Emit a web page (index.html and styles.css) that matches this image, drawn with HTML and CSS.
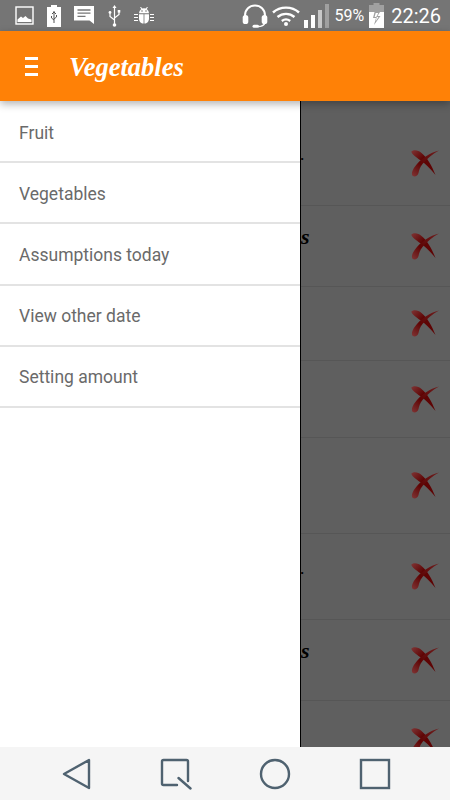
FILE: index.html
```html
<!DOCTYPE html>
<html lang="en">
<head>
<meta charset="utf-8">
<title>Vegetables</title>
<link rel="stylesheet" href="styles.css">
</head>
<body>
<svg class="defs" width="0" height="0" aria-hidden="true">
  <defs>
    <linearGradient id="blob" x1="0" y1="0" x2="1" y2="1">
      <stop offset="0" stop-color="#7f3535"/>
      <stop offset="0.4" stop-color="#5e0404"/>
      <stop offset="1" stop-color="#5e0404"/>
    </linearGradient>
    <linearGradient id="blob2" x1="1" y1="0" x2="0" y2="1">
      <stop offset="0" stop-color="#6e2020"/>
      <stop offset="0.6" stop-color="#5e0404"/>
      <stop offset="1" stop-color="#7f3535"/>
    </linearGradient>
    <symbol id="cross" viewBox="0 0 28 27">
      <path fill="url(#blob)" d="M0.3 1.5C3 -0.8 7.5 0.2 10.5 3C16.5 8 20.5 15 24.5 25C19 18 14 13.5 9 10C5 7 1 4.8 0.3 1.5Z"/>
      <path fill="url(#blob2)" d="M28 0.5C22.5 3.5 16 8.5 11.5 14C9 17 8.2 20 7.5 23C6.8 26.2 3.5 27.4 1.5 25.8C0 23.5 1.5 19.8 4 16.5C9.5 9 19 2.5 28 0.5Z"/>
    </symbol>
  </defs>
</svg>

<div class="screen">
  <header class="status">
    <div class="status-left">
      <svg class="ic" width="19" height="19" viewBox="0 0 19 19"><rect x="1" y="1" width="17" height="17" fill="none" stroke="#fff" stroke-width="1.4"/><path fill="#fff" d="M2.5 16V13.5L6 10.5L8 12L10.5 10L13 12.5L16.5 13.5V16Z"/></svg>
      <svg class="ic" width="14" height="22" viewBox="0 0 14 22"><path fill="#fff" d="M4 0H10V2H14V22H0V2H4Z"/><path fill="none" stroke="#555" stroke-width="1" d="M7 6V18M5 9L7 7L9 9M4.5 11V13L7 15M9.5 10V12L7 14"/></svg>
      <svg class="ic" width="21" height="20" viewBox="0 0 21 20"><path fill="#fff" d="M0 0H20V18L15.5 14.5H0Z"/><path stroke="#777" stroke-width="1.3" d="M3.5 4H16.5M3.5 7.2H16.5M3.5 10.4H11.5"/></svg>
      <svg class="ic" width="13" height="22" viewBox="0 0 13 22"><path fill="none" stroke="#fff" stroke-width="1.2" d="M6.5 2V20M6.5 15L2 11.5V8.5M6.5 13L11 9.5V7"/><path fill="#fff" d="M6.5 0L8.5 3H4.5Z"/><circle cx="6.5" cy="20" r="1.8" fill="#fff"/><circle cx="2" cy="7.5" r="1.4" fill="#fff"/><rect x="9.7" y="5" width="2.6" height="2.6" fill="#fff"/></svg>
      <svg class="ic" width="20" height="17" viewBox="0 0 20 17"><path fill="#fff" d="M5 6.2C5.2 3.2 7.2 1.2 10 1.2C12.8 1.2 14.8 3.2 15 6.2Z"/><path fill="#fff" d="M5 7.2H9.6V16.6C7 16.6 5 14.6 5 11.5ZM10.4 7.2H15V11.5C15 14.6 13 16.6 10.4 16.6Z"/><path stroke="#fff" stroke-width="1.1" d="M6.5 0.2L8 2M13.5 0.2L12 2M0 7.5H4M0 10.5H4M0 13.5H4M16 7.5H20M16 10.5H20M16 13.5H20"/><circle cx="8" cy="4" r="0.8" fill="#777"/><circle cx="12" cy="4" r="0.8" fill="#777"/></svg>
    </div>
    <div class="status-right">
      <svg class="ic" width="26" height="24" viewBox="0 0 26 24"><path fill="none" stroke="#fff" stroke-width="2" d="M3 14V11.5C3 5.5 7.5 1.5 13 1.5C18.5 1.5 23 5.5 23 11.5V14"/><rect x="0.7" y="11" width="5.6" height="9" rx="2.6" fill="#fff"/><rect x="19.7" y="11" width="5.6" height="9" rx="2.6" fill="#fff"/><path fill="none" stroke="#fff" stroke-width="1.3" d="M23 19C22 21.5 19.5 22.5 16 22.5"/><rect x="10.5" y="20.8" width="6.5" height="3" rx="1.5" fill="#fff"/></svg>
      <svg class="ic" width="28" height="21" viewBox="0 0 28 21"><path fill="none" stroke="#fff" stroke-width="2.4" d="M1 7.5C8 1 20 1 27 7.5M5.5 12C10.5 7.8 17.5 7.8 22.5 12M9.8 16C12.4 14 15.6 14 18.2 16"/><circle cx="14" cy="19" r="2" fill="#fff"/></svg>
      <svg class="ic" width="26" height="24" viewBox="0 0 26 24"><rect x="0" y="16" width="4" height="8" fill="#fff"/><rect x="7" y="11" width="4" height="13" fill="#fff"/><rect x="14" y="6" width="4" height="18" fill="#c8c8c8"/><rect x="21" y="0" width="4" height="24" fill="#a0a0a0"/></svg>
      <span class="pct">59%</span>
      <svg class="ic" width="15" height="25" viewBox="0 0 15 25"><path fill="#a0a0a0" d="M4.5 0H10.5V2H15V9H0V2H4.5Z"/><rect x="0" y="9" width="15" height="16" fill="#fff"/><path fill="#a0a0a0" d="M5.5 9H11L8.5 13H11.5L5 22L7 15H4Z"/><path fill="#fff" d="M6.7 10H9.3L7.2 14H9.5L6.5 18.5L7.8 14H5.6Z"/></svg>
      <span class="time">22:26</span>
    </div>
  </header>

  <div class="appbar">
    <div class="burger"><i></i><i></i><i></i></div>
    <h1 class="title">Vegetables</h1>
  </div>

  <main class="body">
    <nav class="drawer">
      <a class="item">Fruit</a>
      <a class="item">Vegetables</a>
      <a class="item">Assumptions today</a>
      <a class="item">View other date</a>
      <a class="item">Setting amount</a>
    </nav>
    <section class="list">
      <div class="row r1"><span class="frag dot">.</span><svg class="cross"><use href="#cross"/></svg></div>
      <div class="row r2"><span class="frag">s</span><svg class="cross"><use href="#cross"/></svg></div>
      <div class="row r3"><svg class="cross"><use href="#cross"/></svg></div>
      <div class="row r4"><svg class="cross"><use href="#cross"/></svg></div>
      <div class="row r5"><svg class="cross"><use href="#cross"/></svg></div>
      <div class="row r6"><span class="frag dot">.</span><svg class="cross"><use href="#cross"/></svg></div>
      <div class="row r7"><span class="frag">s</span><svg class="cross"><use href="#cross"/></svg></div>
      <div class="row r8"><svg class="cross"><use href="#cross"/></svg></div>
    </section>
  </main>

  <footer class="navbar">
    <svg width="30" height="32" viewBox="0 0 30 32"><path fill="none" stroke="#4f6270" stroke-width="2.4" stroke-linejoin="round" d="M27 2V30L2 16Z"/></svg>
    <svg width="32" height="32" viewBox="0 0 32 32"><path fill="none" stroke="#4f6270" stroke-width="2.4" stroke-linecap="round" stroke-linejoin="round" d="M17 27H3.5Q2 27 2 25.5V3.5Q2 2 3.5 2H26.5Q28 2 28 3.5V23M18.5 20L30.5 30.5"/></svg>
    <svg width="32" height="32" viewBox="0 0 32 32"><circle cx="16" cy="16" r="14" fill="none" stroke="#4f6270" stroke-width="2.4"/></svg>
    <svg width="32" height="32" viewBox="0 0 32 32"><rect x="2" y="2" width="28" height="28" fill="none" stroke="#4f6270" stroke-width="2.4"/></svg>
  </footer>
</div>
</body>
</html>
```
FILE: styles.css
```css
* { box-sizing: border-box; }
html, body { margin: 0; padding: 0; }
body { width: 450px; height: 800px; overflow: hidden; background: #fff; font-family: Roboto, "Liberation Sans", sans-serif; }
.defs { display: block; height: 0; }
.screen { width: 450px; height: 800px; display: flex; flex-direction: column; overflow: hidden; }

.status { height: 31px; flex: none; background: #757575; display: flex; justify-content: space-between; align-items: center; padding: 0 9px 0 15px; color: #fff; }
.status-left, .status-right { display: flex; align-items: center; }
.status-left { gap: 13px; }
.ic { display: block; flex: none; }
.status-right { gap: 4px; }
.pct { font-size: 16px; margin-right: 1px; }
.time { font-size: 20px; margin-left: 3px; }

.appbar { height: 70px; flex: none; background: #ff8106; display: flex; align-items: center; padding-left: 25px; position: relative; z-index: 2; box-shadow: 0 3px 8px rgba(0,0,0,.3); }
.burger { width: 13px; display: flex; flex-direction: column; gap: 5px; margin-top: 1px; }
.burger i { display: block; height: 3px; background: #fff; }
.title { margin: 3px 0 0 31px; color: #fff; font-family: "Liberation Serif", serif; font-style: italic; font-weight: 700; font-size: 26.5px; }

.body { flex: 1; display: flex; min-height: 0; }
.drawer { width: 301px; flex: none; background: #fff; border-right: 1px solid #000; display: flex; flex-direction: column; padding-top: 1px; }
.item { height: 61.2px; flex: none; display: flex; align-items: center; padding: 2px 0 0 19px; font-size: 17.5px; color: #6a6a6a; border-bottom: 2px solid #e3e3e3; }

.list { flex: 1; min-width: 0; background: #5f5f5f; overflow: hidden; }
.row { display: flex; align-items: center; justify-content: flex-end; position: relative; padding-right: 11px; border-bottom: 1px solid #565656; }
.r1 { height: 105px; padding-top: 20px; }
.r2 { height: 81px; }
.r3 { height: 74px; }
.r4 { height: 77px; }
.r5 { height: 96px; }
.r6 { height: 86px; }
.r7 { height: 81px; }
.r8 { height: 81px; }
.cross { width: 28px; height: 27px; display: block; flex: none; }
.frag { position: absolute; left: 0; top: 21px; color: #000; font-family: "Liberation Serif", serif; font-style: italic; font-weight: 700; font-size: 22px; line-height: 20px; }
.dot { top: auto; bottom: 39px; font-size: 13px; }

.navbar { height: 53px; flex: none; background: #f5f5f5; display: flex; align-items: center; padding-left: 62px; gap: 67.5px; position: relative; z-index: 3; }
```
